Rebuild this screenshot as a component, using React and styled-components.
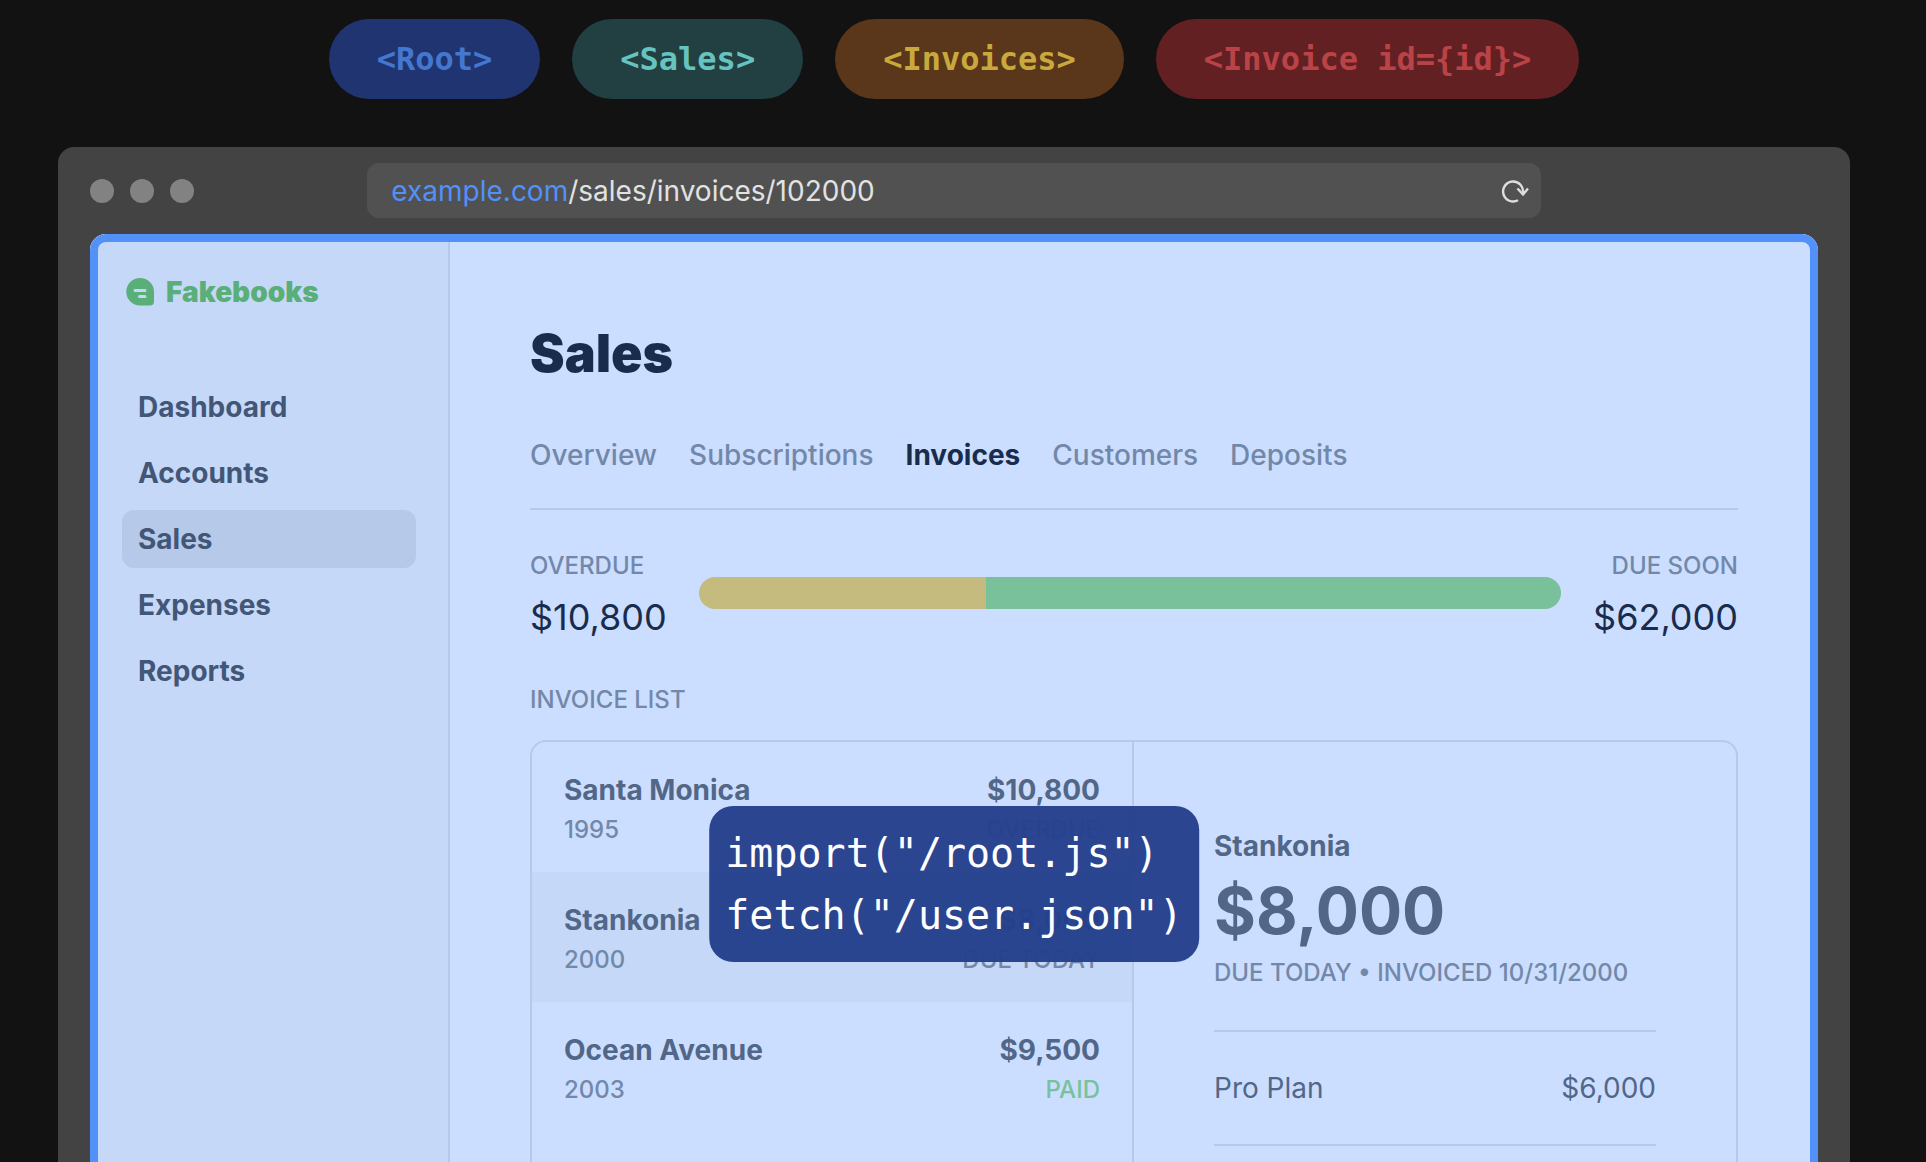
import React from "react";
import styled, { createGlobalStyle } from "styled-components";

const sans = `Inter, "Liberation Sans", sans-serif`;
const mono = `"DejaVu Sans Mono", "Liberation Mono", monospace`;
const line = "#b6c9e8";
const ink = "#192c4c";
const slate = "#526788";
const muted = "#7388a9";

const GlobalStyle = createGlobalStyle`
  * { box-sizing: border-box; }
  body { margin: 0; background: #121212; font-family: ${sans}; }
  h1, h2, p, ul, dl, dd { margin: 0; padding: 0; }
  ul { list-style: none; }
  a { color: inherit; text-decoration: none; }
`;

const Page = styled.div`
  height: 100vh;
  overflow: hidden;
  display: flex;
  flex-direction: column;
  gap: 48px;
  padding: 19px 76px 0 58px;
`;

const Pills = styled.ul`
  display: flex;
  justify-content: center;
  gap: 32px;
`;

const Pill = styled.li`
  padding: 0 48px;
  border-radius: 40px;
  font: 700 32px/80px ${mono};
  white-space: pre;
  color: ${(p) => p.$color};
  background: ${(p) => p.$bg};
`;

const Browser = styled.div`
  position: relative;
  flex: 1;
  min-height: 0;
  display: flex;
  flex-direction: column;
  background: #434343;
  border-radius: 16px 16px 0 0;
`;

const Chrome = styled.div`
  display: grid;
  grid-template-columns: 1fr 4fr 1fr;
  align-items: center;
  padding: 16px;
`;

const Dots = styled.div`
  display: flex;
  gap: 16px;
  padding-left: 16px;
`;

const Dot = styled.span`
  width: 24px;
  height: 24px;
  border-radius: 50%;
  background: #828282;
`;

const AddressBar = styled.div`
  display: flex;
  align-items: center;
  justify-content: space-between;
  height: 55px;
  padding: 0 12px 0 24px;
  border-radius: 12px;
  background: #515151;
  color: #e2e2e2;
  font-size: 28px;
`;

const Host = styled.span`
  color: #5290fa;
`;

const ReloadButton = styled.button`
  display: flex;
  padding: 0;
  border: 0;
  background: none;
  color: #dedede;
`;

const Viewport = styled.div`
  position: relative;
  flex: 1;
  min-height: 0;
  display: flex;
  margin: 0 32px;
  border-radius: 16px 16px 0 0;
  overflow: hidden;
  background: #cbdeff;

  &::after {
    content: "";
    position: absolute;
    inset: 0;
    border: 8px solid #5290fa;
    border-bottom: 0;
    border-radius: 16px 16px 0 0;
    pointer-events: none;
  }
`;

const Sidebar = styled.aside`
  flex: none;
  width: 360px;
  padding: 40px 32px;
  border-right: 2px solid ${line};
  background: #c5d8f8;
`;

const Brand = styled.a`
  display: flex;
  align-items: center;
  gap: 12px;
  height: 36px;
  padding-left: 4px;
  color: #5aae78;
  font-size: 28px;
  font-weight: 900;
`;

const NavList = styled.ul`
  display: grid;
  gap: 8px;
  margin-top: 68px;
`;

const NavLink = styled.a`
  display: block;
  padding: 0 16px;
  border-radius: 12px;
  font-size: 28px;
  font-weight: 700;
  line-height: 58px;
  color: #425677;
  background: ${(p) => (p.$active ? "#b6c9e9" : "transparent")};
`;

const Main = styled.main`
  flex: 1;
  padding: 80px 80px 0;
`;

const Title = styled.h1`
  font-size: 52px;
  font-weight: 900;
  line-height: 80px;
  color: ${ink};
`;

const Tabs = styled.nav`
  display: flex;
  gap: 32px;
  padding: 40px 0 32px;
  border-bottom: 2px solid ${line};
  font-size: 28px;
  line-height: 42px;
`;

const Tab = styled.a`
  font-weight: ${(p) => (p.$active ? 700 : 500)};
  color: ${(p) => (p.$active ? ink : muted)};
`;

const Summary = styled.section`
  display: flex;
  align-items: center;
  gap: 32px;
  padding-top: 32px;
`;

const Stat = styled.div`
  text-align: ${(p) => (p.$end ? "right" : "left")};
`;

const Label = styled.h2`
  font-size: 24px;
  font-weight: 500;
  line-height: 48px;
  color: ${muted};
`;

const StatValue = styled.p`
  font-size: 36px;
  line-height: 54px;
  color: ${ink};
`;

const Meter = styled.div`
  flex: 1;
  display: flex;
  height: 32px;
  border-radius: 16px;
  overflow: hidden;
`;

const MeterPart = styled.span`
  flex: ${(p) => p.$share};
  background: ${(p) => p.$color};
`;

const ListHeading = styled(Label)`
  padding: 32px 0 16px;
`;

const Card = styled.section`
  display: grid;
  grid-template-columns: 1fr 1fr;
  height: 640px;
  border: 2px solid ${line};
  border-radius: 16px;
  overflow: hidden;
`;

const InvoiceList = styled.ul`
  border-right: 2px solid ${line};
`;

const InvoiceLink = styled.a`
  display: flex;
  justify-content: space-between;
  padding: 26px 32px 24px;
  background: ${(p) => (p.$active ? "#c5d8f8" : "transparent")};
`;

const Cell = styled.span`
  display: grid;
  text-align: ${(p) => (p.$end ? "right" : "left")};
`;

const Strong = styled.span`
  font-size: 28px;
  font-weight: 700;
  line-height: 44px;
  color: ${slate};
`;

const Note = styled.span`
  font-size: 24px;
  font-weight: 500;
  line-height: 36px;
  color: ${(p) => p.$color || muted};
`;

const Detail = styled.div`
  display: flex;
  flex-direction: column;
  padding: 82px 80px 0;
`;

const Total = styled.p`
  font-size: 64px;
  font-weight: 700;
  line-height: 86px;
  color: ${slate};
`;

const Lines = styled.dl`
  margin-top: 38px;
`;

const DueNote = styled(Note)`
  line-height: 38px;
`;

const LineItem = styled.div`
  display: flex;
  justify-content: space-between;
  padding: 36px 0;
  border-top: 2px solid ${line};
  font-size: 28px;
  line-height: 40px;
  color: ${slate};
`;

const Tooltip = styled.pre`
  position: absolute;
  top: 659px;
  left: 50%;
  transform: translateX(-50%);
  margin: 0;
  padding: 16px;
  border-radius: 24px;
  font: 400 40px/62px ${mono};
  color: #fff;
  background: rgba(37, 64, 140, 0.97);
`;

const pills = [
  { label: "<Root>", color: "#4477cf", bg: "#203471" },
  { label: "<Sales>", color: "#66c3bf", bg: "#223f42" },
  { label: "<Invoices>", color: "#c9a93e", bg: "#5a371a" },
  { label: "<Invoice id={id}>", color: "#ba4348", bg: "#622023" },
];

const navItems = ["Dashboard", "Accounts", "Sales", "Expenses", "Reports"];
const tabs = ["Overview", "Subscriptions", "Invoices", "Customers", "Deposits"];

const invoices = [
  { name: "Santa Monica", year: "1995", amount: "$10,800", status: "OVERDUE" },
  { name: "Stankonia", year: "2000", amount: "$8,000", status: "DUE TODAY" },
  { name: "Ocean Avenue", year: "2003", amount: "$9,500", status: "PAID", color: "#78c29b" },
];

const LogoIcon = () => (
  <svg width="28" height="28" viewBox="0 0 28 28" aria-hidden="true">
    <path
      fillRule="evenodd"
      fill="currentColor"
      d="M14 0a14 14 0 0 1 14 14v9.500a4 4 0 0 1-4 4H14A13.750 13.750 0 0 1 14 0ZM9 11a1.500 1.500 0 0 0 0 3h10a1.500 1.500 0 0 0 0-3ZM13.500 17a1.500 1.500 0 0 0 0 3H19a1.500 1.500 0 0 0 0-3Z"
    />
  </svg>
);

const ReloadIcon = () => (
  <svg width="28" height="24" viewBox="0 0 28 24" fill="none" stroke="currentColor" strokeWidth="2.4" aria-hidden="true">
    <path d="M17 21.200A10 10 0 1 1 22 14" />
    <path d="M16.500 9.500 22 15.500 27 9.500" />
  </svg>
);

export default function App() {
  return (
    <>
      <GlobalStyle />
      <Page>
        <Pills>
          {pills.map((p) => (
            <Pill key={p.label} $color={p.color} $bg={p.bg}>{p.label}</Pill>
          ))}
        </Pills>
        <Browser>
          <Chrome>
            <Dots><Dot /><Dot /><Dot /></Dots>
            <AddressBar>
              <span><Host>example.com</Host>/sales/invoices/102000</span>
              <ReloadButton aria-label="Reload"><ReloadIcon /></ReloadButton>
            </AddressBar>
          </Chrome>
          <Viewport>
            <Sidebar>
              <Brand href="#"><LogoIcon />Fakebooks</Brand>
              <nav>
                <NavList>
                  {navItems.map((n) => (
                    <li key={n}><NavLink href="#" $active={n === "Sales"}>{n}</NavLink></li>
                  ))}
                </NavList>
              </nav>
            </Sidebar>
            <Main>
              <Title>Sales</Title>
              <Tabs>
                {tabs.map((t) => (
                  <Tab key={t} href="#" $active={t === "Invoices"}>{t}</Tab>
                ))}
              </Tabs>
              <Summary>
                <Stat><Label>OVERDUE</Label><StatValue>$10,800</StatValue></Stat>
                <Meter>
                  <MeterPart $share={1} $color="#c5bb7e" />
                  <MeterPart $share={2} $color="#78c19b" />
                </Meter>
                <Stat $end><Label>DUE SOON</Label><StatValue>$62,000</StatValue></Stat>
              </Summary>
              <ListHeading>INVOICE LIST</ListHeading>
              <Card>
                <InvoiceList>
                  {invoices.map((i) => (
                    <li key={i.name}>
                      <InvoiceLink href="#" $active={i.name === "Stankonia"}>
                        <Cell><Strong>{i.name}</Strong><Note>{i.year}</Note></Cell>
                        <Cell $end><Strong>{i.amount}</Strong><Note $color={i.color}>{i.status}</Note></Cell>
                      </InvoiceLink>
                    </li>
                  ))}
                </InvoiceList>
                <Detail>
                  <Strong>Stankonia</Strong>
                  <Total>$8,000</Total>
                  <DueNote>DUE TODAY • INVOICED 10/31/2000</DueNote>
                  <Lines>
                    <LineItem><dt>Pro Plan</dt><dd>$6,000</dd></LineItem>
                    <LineItem />
                  </Lines>
                </Detail>
              </Card>
            </Main>
          </Viewport>
          <Tooltip>{`import("/root.js")\nfetch("/user.json")`}</Tooltip>
        </Browser>
      </Page>
    </>
  );
}
